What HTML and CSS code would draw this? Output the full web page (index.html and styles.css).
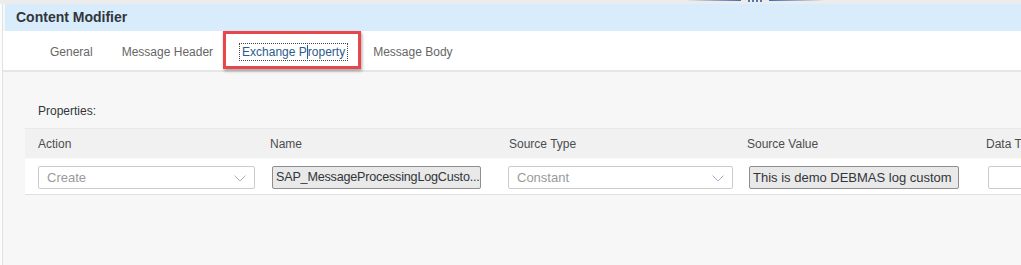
FILE: index.html
```html
<!DOCTYPE html>
<html>
<head>
<meta charset="utf-8">
<link rel="stylesheet" href="styles.css">
</head>
<body>
<div class="top-strip">
  <span class="deco deco-left"></span>
  <span class="deco-dots"><i></i><i></i><i></i><i></i></span>
  <span class="deco deco-right"></span>
</div>
<div class="frame">
  <div class="title-bar">Content Modifier</div>
  <div class="tabs">
    <span class="tab">General</span>
    <span class="tab">Message Header</span>
    <span class="tab active">Exchange P<span class="caret"></span>roperty</span>
    <span class="tab">Message Body</span>
  </div>
  <div class="highlight"></div>
  <div class="content">
    <div class="props-label">Properties:</div>
    <div class="table">
      <div class="row head">
        <div class="cell">Action</div>
        <div class="cell">Name</div>
        <div class="cell">Source Type</div>
        <div class="cell">Source Value</div>
        <div class="cell">Data T</div>
      </div>
      <div class="row data">
        <div class="cell"><div class="select s-action"><span class="ph">Create</span><svg class="chev" width="12" height="7" viewBox="0 0 12 7"><path d="M0.5 0.5 L6 6 L11.5 0.5" fill="none" stroke="#9fb4cc" stroke-width="1"/></svg></div></div>
        <div class="cell"><div class="field s-name">SAP_MessageProcessingLogCusto...</div></div>
        <div class="cell"><div class="select s-type"><span class="ph">Constant</span><svg class="chev" width="12" height="7" viewBox="0 0 12 7"><path d="M0.5 0.5 L6 6 L11.5 0.5" fill="none" stroke="#9fb4cc" stroke-width="1"/></svg></div></div>
        <div class="cell"><div class="field s-value">This is demo DEBMAS log custom</div></div>
        <div class="cell"><div class="blank"></div></div>
      </div>
    </div>
  </div>
</div>
</body>
</html>
```

FILE: styles.css
```css
html, body {
  margin: 0;
  padding: 0;
  background: #fcfcfc;
  font-family: "Liberation Sans", Arial, sans-serif;
  overflow: hidden;
}
body {
  width: 1021px;
  height: 265px;
}
.top-strip {
  height: 4px;
  background: #ececec;
  display: flex;
  align-items: flex-start;
  padding-left: 685px;
}
.deco {
  display: block;
  height: 1px;
  width: 56px;
}
.deco-left {
  background: linear-gradient(to right, rgba(60,110,180,0), #3a6db5);
}
.deco-right {
  background: linear-gradient(to right, #3a6db5, rgba(60,110,180,0));
}
.deco-dots {
  display: flex;
  gap: 2px;
  margin: 0 7px;
}
.deco-dots i {
  display: block;
  width: 2px;
  height: 2px;
  background: #4a78b8;
}
.frame {
  position: relative;
  margin-left: 2px;
  border-left: 1px solid #e2e2e2;
  height: 261px;
  background: #f7f7f7;
}
.title-bar {
  margin-left: 2px;
  height: 27px;
  background: #d8ecfc;
  font-weight: bold;
  font-size: 14px;
  color: #32363a;
  line-height: 26px;
  padding-left: 11px;
}
.tabs {
  background: #fff;
  border-bottom: 2px solid #e6e6e6;
  display: flex;
  align-items: center;
  padding-left: 47px;
  padding-top: 3px;
  box-sizing: border-box;
  height: 41px;
}
.tab {
  font-size: 12px;
  color: #666;
  margin-right: 29px;
  position: relative;
}
.tab.active {
  color: #2c5b8e;
  outline: 1px dotted #444;
  outline-offset: 1px;
  padding: 0 1px;
  margin-left: -1px;
  margin-right: 27px;
}
.caret {
  display: inline-block;
  width: 1px;
  height: 14px;
  background: #2c5b8e;
  vertical-align: -3px;
}
.highlight {
  position: absolute;
  left: 220px;
  top: 27px;
  width: 132px;
  height: 32px;
  border: 3px solid #e8464a;
  box-shadow: 1px 2px 3px rgba(0,0,0,0.35);
}
.content {
  padding-top: 31px;
}
.props-label {
  font-size: 12px;
  color: #32363a;
  line-height: 16px;
  padding-left: 35px;
  margin-bottom: 9px;
}
.table {
  margin-left: 22px;
}
.row {
  display: grid;
  grid-template-columns: 232px 239px 238px 239px 1fr;
}
.row.head {
  height: 30px;
  box-sizing: border-box;
  background: #f1f1f1;
  border-top: 1px solid #e9e9e9;
  align-items: center;
}
.row.head .cell {
  font-size: 12px;
  color: #4a4d50;
  padding-left: 13px;
  white-space: nowrap;
  overflow: hidden;
}
.row.data {
  height: 37px;
  box-sizing: border-box;
  background: #fff;
  border-top: 1px solid #fafafa;
  border-bottom: 1px solid #e0e0e0;
}
.row.data .cell {
  padding-left: 13px;
  padding-top: 7px;
  overflow: hidden;
}
.select, .field, .blank {
  box-sizing: border-box;
  height: 23px;
  font-size: 13px;
  line-height: 21px;
  white-space: nowrap;
  overflow: hidden;
}
.select {
  display: flex;
  align-items: center;
  justify-content: space-between;
  background: #fff;
  border: 1px solid #cbcbcb;
  border-radius: 2px;
  padding: 0 8px 0 8px;
}
.ph {
  color: #9a9a9a;
}
.chev {
  display: block;
  margin-top: 1px;
}
.s-action {
  width: 217px;
}
.s-type {
  width: 225px;
  margin-left: -1px;
}
.field {
  background: #e9e9e9;
  border: 1px solid #8e8e8e;
  border-radius: 2px;
  color: #32363a;
  padding-left: 3px;
}
.s-name {
  width: 209px;
  margin-left: 2px;
  font-size: 12.6px;
  letter-spacing: -0.2px;
}
.s-value {
  width: 210px;
  margin-left: 2px;
}
.blank {
  background: #fff;
  border: 1px solid #cbcbcb;
  border-radius: 2px;
  margin-left: 2px;
  width: 60px;
}
```
